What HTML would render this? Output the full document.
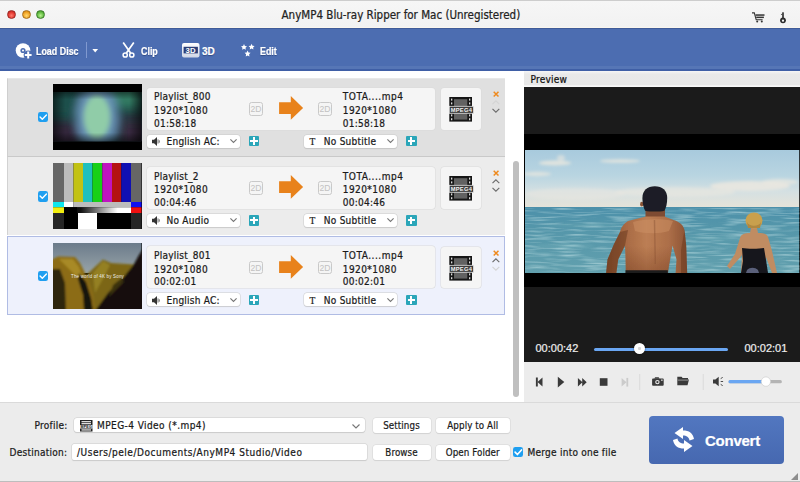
<!DOCTYPE html>
<html><head><meta charset="utf-8"><title>AnyMP4 Blu-ray Ripper for Mac</title>
<style>
html,body{margin:0;padding:0;}
body{width:800px;height:482px;overflow:hidden;background:#fff;position:relative;font-family:"DejaVu Sans Condensed","Liberation Sans",sans-serif;font-size:10px;letter-spacing:.25px;color:#1a1a1a;}
.a{position:absolute;}
svg{position:absolute;overflow:visible;}
.t{position:absolute;white-space:nowrap;line-height:14px;-webkit-text-stroke:.22px currentColor;}
#titlebar{left:0;top:0;width:800px;height:28px;background:linear-gradient(#f6f6f6,#f2f2f2);border-top:1px solid #cdcdcd;border-bottom:1.500px solid #faf6ee;box-sizing:border-box;}
.tl{position:absolute;top:9px;width:9px;height:9px;border-radius:50%;box-sizing:border-box;}
#toolbar{left:0;top:28px;width:800px;height:42.5px;background:#4c6db1;border-top:1px solid #3f5b98;box-sizing:border-box;}
.tb{color:#fff;font-weight:bold;font-size:10px;font-family:"Liberation Sans",sans-serif;letter-spacing:0;transform:scaleX(.89);transform-origin:0 50%;text-shadow:0 1px 1px rgba(30,50,100,.6);}
.row{position:absolute;left:7px;width:498px;height:79.3px;box-sizing:border-box;}
.cb{position:absolute;width:10.300px;height:10.300px;border-radius:2.300px;background:#1f9ff0;}
.box{position:absolute;background:#f5f5f5;border-radius:3px;box-shadow:0 0 0 .5px #d9d9d9;}
.sel{position:absolute;background:#fff;border-radius:3px;box-shadow:0 0 0 .5px #cdcdcd,0 .5px 1px rgba(0,0,0,.15);height:13px;}
.plus{position:absolute;width:10.5px;height:10.5px;background:#2ba6b9;border-radius:1px;}
.plus:before{content:"";position:absolute;left:4.25px;top:1.5px;width:2px;height:7.5px;background:#fff;}
.plus:after{content:"";position:absolute;left:1.5px;top:4.25px;width:7.5px;height:2px;background:#fff;}
.d2{position:absolute;width:13.800px;height:13.600px;letter-spacing:0;box-sizing:border-box;border:1px solid #c9c9c9;border-radius:2.500px;color:#c2c2c2;font-size:8.600px;line-height:12.400px;text-align:center;font-family:"Liberation Sans",sans-serif;}
.btn{position:absolute;background:#fff;border-radius:3px;box-shadow:0 0 0 .5px #d6d6d6,0 .5px .8px rgba(0,0,0,.12);text-align:center;line-height:16px;height:14.5px;overflow:hidden;font-size:9.7px;letter-spacing:.1px;-webkit-text-stroke:.2px currentColor;}
.tm{color:#ededed;letter-spacing:0;font-family:"Liberation Sans",sans-serif;font-size:11px;}
</style></head><body>
<!-- TITLE BAR -->
<div id="titlebar" class="a">
  <div class="tl" style="left:7.4px;background:radial-gradient(circle at 50% 65%,#ff7a6e,#e0342c 60%,#a8201c);border:.5px solid #9a2a26"></div>
  <div class="tl" style="left:21.8px;background:radial-gradient(circle at 50% 65%,#ffd870,#f0a020 60%,#b87410);border:.5px solid #a8701c"></div>
  <div class="tl" style="left:36.400px;background:radial-gradient(circle at 50% 65%,#b8f090,#5cb83c 60%,#3a8024);border:.5px solid #3c7c2c"></div>
  <span class="t" style="left:281.5px;top:6.7px;font-size:11.5px;letter-spacing:0;color:#222;">AnyMP4 Blu-ray Ripper for Mac (Unregistered)</span>
  <!-- cart -->
  <svg style="left:752px;top:10.5px" width="13" height="11" viewBox="0 0 13 11"><path d="M0 .900h2.300l1.900 6.900h6.400" fill="none" stroke="#333" stroke-width="1.100"/><rect x="3.500" y="2.300" width="9" height="1.500" fill="#333"/><rect x="4.200" y="4.600" width="7.700" height="1.500" fill="#333"/><circle cx="5.200" cy="9.500" r="1" fill="#333"/><circle cx="9.800" cy="9.500" r="1" fill="#333"/></svg>
  <!-- key -->
  <svg style="left:779px;top:9.500px" width="8" height="13" viewBox="0 0 8 13"><circle cx="4" cy="9.300" r="2.900" fill="#2c2c2c"/><rect x="3.200" y="1.300" width="1.600" height="6" fill="#2c2c2c"/><path d="M3.200 2.500l-1.400 1.500h1.400z" fill="#2c2c2c"/><circle cx="4" cy="9.700" r="1.150" fill="#f4f4f4"/></svg>
</div>

<!-- TOOLBAR -->
<div id="toolbar" class="a"></div>
<div class="a" style="left:0;top:65.5px;width:800px;height:3.800px;background:#5676b6"></div><div class="a" style="left:0;top:69.200px;width:800px;height:1.400px;background:#3f5fa6"></div>
<!-- load disc icon -->
<svg style="left:15.3px;top:41.7px" width="18" height="18" viewBox="0 0 18 18"><circle cx="8" cy="8.5" r="7.3" fill="#fff"/><circle cx="8" cy="8.5" r="2.6" fill="#4c6db1"/><circle cx="8" cy="8.5" r="1" fill="#fff"/><circle cx="13.2" cy="13" r="4.6" fill="#4c6db1"/><path d="M13.2 9.6v6.8M9.8 13h6.8" stroke="#fff" stroke-width="2"/></svg>
<span class="t tb" style="left:36.3px;top:44.5px;">Load Disc</span>
<div class="a" style="left:86px;top:41.5px;width:1px;height:16.500px;background:#8099d0;"></div>
<svg style="left:92px;top:49.200px" width="6.400" height="3.800" viewBox="0 0 6 4"><path d="M0 0h6L3 3.6z" fill="#fff"/></svg>
<!-- scissors -->
<svg style="left:121.5px;top:42px" width="13" height="16" viewBox="0 0 13 16"><path d="M1.2 0.4L8.6 11M11.8 0.4L4.4 11" stroke="#fff" stroke-width="1.7" fill="none"/><circle cx="3.2" cy="13" r="2.1" fill="none" stroke="#fff" stroke-width="1.5"/><circle cx="9.8" cy="13" r="2.1" fill="none" stroke="#fff" stroke-width="1.5"/></svg>
<span class="t tb" style="left:141px;top:44.5px;">Clip</span>
<!-- 3D icon -->
<svg style="left:181.5px;top:43px" width="18" height="15" viewBox="0 0 18 15"><defs><linearGradient id="g3d" x1="0" y1="0" x2="0" y2="1"><stop offset="0" stop-color="#fff"/><stop offset="1" stop-color="#cfd6e6"/></linearGradient></defs><rect x="0" y="0" width="17.5" height="14.5" rx="2" fill="url(#g3d)"/><rect x="1.600" y="3.800" width="14.300" height="6.600" fill="#2c3f78"/><text x="8.750" y="9.900" font-size="7.800" font-weight="bold" font-family="Liberation Sans,sans-serif" fill="#fff" text-anchor="middle">3D</text></svg>
<span class="t tb" style="left:202px;top:44.5px;transform:none">3D</span>
<!-- edit stars -->
<svg style="left:241px;top:43.5px" width="15" height="13" viewBox="0 0 15 13"><g fill="#fff"><path d="M3 0l.9 1.9 2.1.3-1.5 1.5.35 2.1L3 4.8l-1.85 1 .35-2.1L0 2.2l2.1-.3z"/><path transform="translate(7.6 -0.2)" d="M3 0l.9 1.9 2.1.3-1.5 1.5.35 2.1L3 4.8l-1.85 1 .35-2.1L0 2.2l2.1-.3z"/><path transform="translate(3.6 6.6)" d="M3 0l.9 1.9 2.1.3-1.5 1.5.35 2.1L3 4.8l-1.85 1 .35-2.1L0 2.2l2.1-.3z"/></g></svg>
<span class="t tb" style="left:260px;top:44.5px;">Edit</span>
<!-- LIST -->
<div class="row" style="top:77.5px;background:#e0e0e0;border-left:1px solid #cfcfcf;border-top:1px solid #e8e8e8;"></div>
<div class="cb" style="left:37.8px;top:112.1px"><svg style="left:0;top:0" width="10.300" height="10.300" viewBox="0 0 11 11"><path d="M2.200 5.300l2.400 2.400 4.400-4.600" fill="none" stroke="#fff" stroke-width="1.500" stroke-linecap="round" stroke-linejoin="round"/></svg></div>
<div class="a" style="left:53px;top:84.0px;width:88.5px;height:66px;background:#000;overflow:hidden"><svg style="left:0;top:0" width="88.5" height="66" viewBox="0 0 88.5 66"><defs><filter id="bl1" x="-30%" y="-30%" width="160%" height="160%"><feGaussianBlur stdDeviation="4"/></filter><filter id="bl1b" x="-30%" y="-30%" width="160%" height="160%"><feGaussianBlur stdDeviation="2.8"/></filter><linearGradient id="vg1" x1="0" x2="1" y1="0" y2="0"><stop offset="0" stop-color="#000" stop-opacity=".55"/><stop offset=".14" stop-color="#000" stop-opacity="0"/><stop offset=".86" stop-color="#000" stop-opacity="0"/><stop offset="1" stop-color="#000" stop-opacity=".6"/></linearGradient><linearGradient id="vg1b" x1="0" x2="0" y1="0" y2="1"><stop offset="0" stop-color="#000" stop-opacity=".45"/><stop offset=".15" stop-color="#000" stop-opacity="0"/><stop offset=".82" stop-color="#000" stop-opacity="0"/><stop offset="1" stop-color="#000" stop-opacity=".5"/></linearGradient><clipPath id="c1"><rect x="0" y="8" width="88.5" height="49.2"/></clipPath></defs><g clip-path="url(#c1)"><rect x="0" y="8" width="88.5" height="49.5" fill="#1c4244"/><g filter="url(#bl1)"><rect x="-8" y="2" width="34" height="30" fill="#1d504c"/><rect x="-8" y="38" width="36" height="28" fill="#30283a"/><rect x="56" y="2" width="32" height="22" fill="#327a62"/><rect x="62" y="30" width="34" height="34" fill="#2a3440"/><rect x="70" y="40" width="24" height="24" fill="#382c40"/><ellipse cx="44" cy="33" rx="21" ry="34" fill="#6690b4"/></g><g filter="url(#bl1b)"><ellipse cx="44" cy="33" rx="13.500" ry="22" fill="#90cca8"/></g><rect x="0" y="8" width="88.5" height="49.5" fill="url(#vg1)"/><rect x="0" y="8" width="88.5" height="49.5" fill="url(#vg1b)"/></g></svg>
</div>
<div class="box" style="left:147px;top:87.5px;width:288px;height:42px"></div>
<span class="t" style="left:154px;top:90.3px">Playlist_800</span>
<span class="t" style="left:154px;top:104.0px;letter-spacing:.42px">1920*1080</span>
<span class="t" style="left:154px;top:116.7px">01:58:18</span>
<span class="t" style="left:342.8px;top:90.3px;letter-spacing:.52px">TOTA....mp4</span>
<span class="t" style="left:342.8px;top:104.0px;letter-spacing:.42px">1920*1080</span>
<span class="t" style="left:342.8px;top:116.7px">01:58:18</span>
<div class="d2" style="left:249.1px;top:102.1px">2D</div>
<div class="d2" style="left:318.1px;top:102.1px">2D</div>
<svg style="left:279px;top:96.1px" width="24.200" height="23.800" viewBox="0 0 24.200 24"><path d="M0 6.200h11.800V0L24.200 12 11.800 24v-5.800H0z" fill="#e8821b"/></svg>
<div class="sel" style="left:147px;top:134.7px;width:93px"></div>
<svg style="left:151.5px;top:137.0px" width="8" height="9" viewBox="0 0 8 9"><path d="M0 2.8h2L5 0v9L2 6.2H0z" fill="#333"/><path d="M6 2.4v4.2M7.3 3.3v2.4" stroke="#555" stroke-width=".8"/></svg>
<span class="t" style="left:166.5px;top:135.0px">English AC:</span>
<svg style="left:229.8px;top:138.8px" width="7" height="4" viewBox="0 0 7 4"><path d="M.4.4L3.5 3.4 6.6.4" fill="none" stroke="#777" stroke-width="1.150"/></svg>
<div class="plus" style="left:248.8px;top:135.8px"></div>
<div class="sel" style="left:304px;top:134.7px;width:92.8px"></div>
<span class="t" style="left:309.5px;top:134.8px;font-family:'Liberation Serif',serif;font-size:9.5px;letter-spacing:0">T</span>
<span class="t" style="left:323.8px;top:135.0px">No Subtitle</span>
<svg style="left:386.8px;top:138.8px" width="7" height="4" viewBox="0 0 7 4"><path d="M.4.4L3.5 3.4 6.6.4" fill="none" stroke="#777" stroke-width="1.150"/></svg>
<div class="plus" style="left:406px;top:135.8px"></div>
<div class="box" style="left:441px;top:88.0px;width:40px;height:41.5px"></div>
<svg style="left:448.8px;top:96.8px" width="25" height="25" viewBox="0 0 25 25"><rect x="0.300" y="0" width="22.700" height="24.600" fill="#161616"/><rect x="5" y="2.200" width="13.300" height="7" fill="#626262"/><rect x="5" y="16.200" width="13.300" height="6.400" fill="#626262"/><g fill="#dcdcdc"><rect x="2" y="1.600" width="1.300" height="2"/><rect x="2" y="5.400" width="1.300" height="2"/><rect x="2" y="17.400" width="1.300" height="2"/><rect x="2" y="21.200" width="1.300" height="2"/><rect x="20" y="1.600" width="1.300" height="2"/><rect x="20" y="5.400" width="1.300" height="2"/><rect x="20" y="17.400" width="1.300" height="2"/><rect x="20" y="21.200" width="1.300" height="2"/></g><rect x="0.300" y="9.300" width="24.200" height="7" fill="#3c3c3c" stroke="#e4e4e4" stroke-width=".8"/><text x="12.400" y="15" font-size="5.800" font-weight="bold" font-family="Liberation Sans,sans-serif" fill="#f4f4f4" text-anchor="middle" textLength="21.500" lengthAdjust="spacingAndGlyphs">MPEG4</text></svg>
<svg style="left:493px;top:91.0px" width="6.200" height="6.200" viewBox="0 0 7 7"><path d="M.8.8l5.4 5.4M6.2.8L.8 6.2" stroke="#ef8a1e" stroke-width="1.7"/></svg>
<svg style="left:492.2px;top:99.7px" width="8" height="5" viewBox="0 0 8 5"><path d="M.5 4.200L3.900.800l3.400 3.400" fill="none" stroke="#d4d4d4" stroke-width="1.150"/></svg>
<svg style="left:492.2px;top:107.5px" width="8" height="5" viewBox="0 0 8 5"><path d="M.5.800L3.900 4.200 7.300.800" fill="none" stroke="#6c6c6c" stroke-width="1.150"/></svg>
<div class="row" style="top:156.20000000000002px;background:#ececec;border-left:1px solid #d2d2d2;border-top:1px solid #c9c9c9;"></div>
<div class="cb" style="left:37.8px;top:191.4px"><svg style="left:0;top:0" width="10.300" height="10.300" viewBox="0 0 11 11"><path d="M2.200 5.300l2.400 2.400 4.400-4.600" fill="none" stroke="#fff" stroke-width="1.500" stroke-linecap="round" stroke-linejoin="round"/></svg></div>
<div class="a" style="left:53px;top:163.3px;width:88.5px;height:66px;background:#000;overflow:hidden"><svg style="left:0;top:0" width="88.5" height="66" viewBox="0 0 88.5 66"><defs><linearGradient id="gr2" x1="0" x2="1" y1="0" y2="0"><stop offset="0" stop-color="#000"/><stop offset="0.25" stop-color="#111"/><stop offset="0.8" stop-color="#fff"/><stop offset="1" stop-color="#fff"/></linearGradient></defs>
<rect x="0" y="0" width="11" height="39" fill="#666"/><rect x="11" y="0" width="9.5" height="39" fill="#bcbcbc"/><rect x="20.5" y="0" width="9.5" height="39" fill="#c2c214"/><rect x="30" y="0" width="9.5" height="39" fill="#1fc0bd"/><rect x="39.5" y="0" width="9.8" height="39" fill="#18d018"/><rect x="49.3" y="0" width="9.7" height="39" fill="#c014c0"/><rect x="59" y="0" width="9.3" height="39" fill="#b41212"/><rect x="68.3" y="0" width="9.7" height="39" fill="#1010b4"/><rect x="78" y="0" width="10.5" height="39" fill="#666"/>
<rect x="0" y="39" width="11" height="5.3" fill="#10e6ee"/><rect x="11" y="39" width="9.5" height="5.3" fill="#fff"/><rect x="20.5" y="39" width="57.5" height="5.3" fill="#bcbcbc"/><rect x="78" y="39" width="10.5" height="5.3" fill="#1010f0"/>
<rect x="0" y="44.3" width="11" height="5.7" fill="#f2ee10"/><rect x="11" y="44.3" width="67" height="5.7" fill="url(#gr2)"/><rect x="11" y="44.3" width="13" height="5.7" fill="#000"/><rect x="78" y="44.3" width="10.5" height="5.7" fill="#f01010"/>
<rect x="0" y="50" width="11" height="16" fill="#262626"/><rect x="11" y="50" width="67" height="16" fill="#000"/><rect x="25" y="50" width="19" height="16" fill="#fff"/><rect x="78" y="50" width="10.5" height="16" fill="#262626"/></svg>
</div>
<div class="box" style="left:147px;top:166.8px;width:288px;height:42px"></div>
<span class="t" style="left:154px;top:169.60000000000002px">Playlist_2</span>
<span class="t" style="left:154px;top:183.3px;letter-spacing:.42px">1920*1080</span>
<span class="t" style="left:154px;top:196.0px">00:04:46</span>
<span class="t" style="left:342.8px;top:169.60000000000002px;letter-spacing:.52px">TOTA....mp4</span>
<span class="t" style="left:342.8px;top:183.3px;letter-spacing:.42px">1920*1080</span>
<span class="t" style="left:342.8px;top:196.0px">00:04:46</span>
<div class="d2" style="left:249.1px;top:181.4px">2D</div>
<div class="d2" style="left:318.1px;top:181.4px">2D</div>
<svg style="left:279px;top:175.4px" width="24.200" height="23.800" viewBox="0 0 24.200 24"><path d="M0 6.200h11.800V0L24.200 12 11.800 24v-5.800H0z" fill="#e8821b"/></svg>
<div class="sel" style="left:147px;top:214.0px;width:93px"></div>
<svg style="left:151.5px;top:216.3px" width="8" height="9" viewBox="0 0 8 9"><path d="M0 2.8h2L5 0v9L2 6.2H0z" fill="#333"/><path d="M6 2.4v4.2M7.3 3.3v2.4" stroke="#555" stroke-width=".8"/></svg>
<span class="t" style="left:166.5px;top:214.3px">No Audio</span>
<svg style="left:229.8px;top:218.10000000000002px" width="7" height="4" viewBox="0 0 7 4"><path d="M.4.4L3.5 3.4 6.6.4" fill="none" stroke="#777" stroke-width="1.150"/></svg>
<div class="plus" style="left:248.8px;top:215.10000000000002px"></div>
<div class="sel" style="left:304px;top:214.0px;width:92.8px"></div>
<span class="t" style="left:309.5px;top:214.10000000000002px;font-family:'Liberation Serif',serif;font-size:9.5px;letter-spacing:0">T</span>
<span class="t" style="left:323.8px;top:214.3px">No Subtitle</span>
<svg style="left:386.8px;top:218.10000000000002px" width="7" height="4" viewBox="0 0 7 4"><path d="M.4.4L3.5 3.4 6.6.4" fill="none" stroke="#777" stroke-width="1.150"/></svg>
<div class="plus" style="left:406px;top:215.10000000000002px"></div>
<div class="box" style="left:441px;top:167.3px;width:40px;height:41.5px"></div>
<svg style="left:448.8px;top:176.10000000000002px" width="25" height="25" viewBox="0 0 25 25"><rect x="0.300" y="0" width="22.700" height="24.600" fill="#161616"/><rect x="5" y="2.200" width="13.300" height="7" fill="#626262"/><rect x="5" y="16.200" width="13.300" height="6.400" fill="#626262"/><g fill="#dcdcdc"><rect x="2" y="1.600" width="1.300" height="2"/><rect x="2" y="5.400" width="1.300" height="2"/><rect x="2" y="17.400" width="1.300" height="2"/><rect x="2" y="21.200" width="1.300" height="2"/><rect x="20" y="1.600" width="1.300" height="2"/><rect x="20" y="5.400" width="1.300" height="2"/><rect x="20" y="17.400" width="1.300" height="2"/><rect x="20" y="21.200" width="1.300" height="2"/></g><rect x="0.300" y="9.300" width="24.200" height="7" fill="#3c3c3c" stroke="#e4e4e4" stroke-width=".8"/><text x="12.400" y="15" font-size="5.800" font-weight="bold" font-family="Liberation Sans,sans-serif" fill="#f4f4f4" text-anchor="middle" textLength="21.500" lengthAdjust="spacingAndGlyphs">MPEG4</text></svg>
<svg style="left:493px;top:170.3px" width="6.200" height="6.200" viewBox="0 0 7 7"><path d="M.8.8l5.4 5.4M6.2.8L.8 6.2" stroke="#ef8a1e" stroke-width="1.7"/></svg>
<svg style="left:492.2px;top:179.0px" width="8" height="5" viewBox="0 0 8 5"><path d="M.5 4.200L3.900.800l3.400 3.400" fill="none" stroke="#6c6c6c" stroke-width="1.150"/></svg>
<svg style="left:492.2px;top:186.8px" width="8" height="5" viewBox="0 0 8 5"><path d="M.5.800L3.900 4.200 7.300.800" fill="none" stroke="#6c6c6c" stroke-width="1.150"/></svg>
<div class="row" style="top:236.2px;background:#eef1fc;border:1px solid #b0bce4;"></div>
<div class="cb" style="left:37.8px;top:270.8px"><svg style="left:0;top:0" width="10.300" height="10.300" viewBox="0 0 11 11"><path d="M2.200 5.300l2.400 2.400 4.400-4.600" fill="none" stroke="#fff" stroke-width="1.500" stroke-linecap="round" stroke-linejoin="round"/></svg></div>
<div class="a" style="left:53px;top:242.7px;width:88.5px;height:66px;background:#000;overflow:hidden"><svg style="left:0;top:0" width="88.5" height="66" viewBox="0 0 88.5 66"><defs><linearGradient id="sk3" x1="0" x2="0" y1="0" y2="1"><stop offset="0" stop-color="#6b7b8b"/><stop offset="1" stop-color="#98a4a8"/></linearGradient><filter id="bl3"><feGaussianBlur stdDeviation="1"/></filter></defs>
<rect x="0" y="0" width="88.5" height="30" fill="url(#sk3)"/>
<g filter="url(#bl3)">
<path d="M31 34L50 16.5l8 3.5 24 1.5L66 45 46 68H30z" fill="#7c6619"/>
<path d="M40 30l10-12 7 4-6 12-9 16z" fill="#948024"/>
<path d="M-2 17l7-3.5 17 .5 5 6 5 10 4 9 4 12 2 17H-2z" fill="#8c6c16"/>
<path d="M6 16l14 0 6 8 4 12-8-4-8-8z" fill="#a88a26"/>
<path d="M-2 26l9 0 5 14 1 28H-2z" fill="#2e2610"/>
<path d="M26 30l7 9 5 16 2 13h-9l-1-16-5-16z" fill="#181408"/>
<path d="M90 6l-4 6-5 9-11 14-15 15-13 18h48z" fill="#14110a"/>
<path d="M60 42l10-8 0 6-14 14z" fill="#3a3010"/>
</g>
<text x="18" y="35" font-size="4.6" font-family="Liberation Sans,sans-serif" fill="#f0f0f0" textLength="53" lengthAdjust="spacingAndGlyphs">The world of 4K by Sony</text></svg>
</div>
<div class="box" style="left:147px;top:246.2px;width:288px;height:42px"></div>
<span class="t" style="left:154px;top:249.0px">Playlist_801</span>
<span class="t" style="left:154px;top:262.7px;letter-spacing:.42px">1920*1080</span>
<span class="t" style="left:154px;top:275.4px">00:02:01</span>
<span class="t" style="left:342.8px;top:249.0px;letter-spacing:.52px">TOTA....mp4</span>
<span class="t" style="left:342.8px;top:262.7px;letter-spacing:.42px">1920*1080</span>
<span class="t" style="left:342.8px;top:275.4px">00:02:01</span>
<div class="d2" style="left:249.1px;top:260.8px">2D</div>
<div class="d2" style="left:318.1px;top:260.8px">2D</div>
<svg style="left:279px;top:254.79999999999998px" width="24.200" height="23.800" viewBox="0 0 24.200 24"><path d="M0 6.200h11.800V0L24.200 12 11.800 24v-5.800H0z" fill="#e8821b"/></svg>
<div class="sel" style="left:147px;top:293.4px;width:93px"></div>
<svg style="left:151.5px;top:295.7px" width="8" height="9" viewBox="0 0 8 9"><path d="M0 2.8h2L5 0v9L2 6.2H0z" fill="#333"/><path d="M6 2.4v4.2M7.3 3.3v2.4" stroke="#555" stroke-width=".8"/></svg>
<span class="t" style="left:166.5px;top:293.7px">English AC:</span>
<svg style="left:229.8px;top:297.5px" width="7" height="4" viewBox="0 0 7 4"><path d="M.4.4L3.5 3.4 6.6.4" fill="none" stroke="#777" stroke-width="1.150"/></svg>
<div class="plus" style="left:248.8px;top:294.5px"></div>
<div class="sel" style="left:304px;top:293.4px;width:92.8px"></div>
<span class="t" style="left:309.5px;top:293.5px;font-family:'Liberation Serif',serif;font-size:9.5px;letter-spacing:0">T</span>
<span class="t" style="left:323.8px;top:293.7px">No Subtitle</span>
<svg style="left:386.8px;top:297.5px" width="7" height="4" viewBox="0 0 7 4"><path d="M.4.4L3.5 3.4 6.6.4" fill="none" stroke="#777" stroke-width="1.150"/></svg>
<div class="plus" style="left:406px;top:294.5px"></div>
<div class="box" style="left:441px;top:246.7px;width:40px;height:41.5px"></div>
<svg style="left:448.8px;top:255.5px" width="25" height="25" viewBox="0 0 25 25"><rect x="0.300" y="0" width="22.700" height="24.600" fill="#161616"/><rect x="5" y="2.200" width="13.300" height="7" fill="#626262"/><rect x="5" y="16.200" width="13.300" height="6.400" fill="#626262"/><g fill="#dcdcdc"><rect x="2" y="1.600" width="1.300" height="2"/><rect x="2" y="5.400" width="1.300" height="2"/><rect x="2" y="17.400" width="1.300" height="2"/><rect x="2" y="21.200" width="1.300" height="2"/><rect x="20" y="1.600" width="1.300" height="2"/><rect x="20" y="5.400" width="1.300" height="2"/><rect x="20" y="17.400" width="1.300" height="2"/><rect x="20" y="21.200" width="1.300" height="2"/></g><rect x="0.300" y="9.300" width="24.200" height="7" fill="#3c3c3c" stroke="#e4e4e4" stroke-width=".8"/><text x="12.400" y="15" font-size="5.800" font-weight="bold" font-family="Liberation Sans,sans-serif" fill="#f4f4f4" text-anchor="middle" textLength="21.500" lengthAdjust="spacingAndGlyphs">MPEG4</text></svg>
<svg style="left:493px;top:249.7px" width="6.200" height="6.200" viewBox="0 0 7 7"><path d="M.8.8l5.4 5.4M6.2.8L.8 6.2" stroke="#ef8a1e" stroke-width="1.7"/></svg>
<svg style="left:492.2px;top:258.4px" width="8" height="5" viewBox="0 0 8 5"><path d="M.5 4.200L3.900.800l3.400 3.400" fill="none" stroke="#6c6c6c" stroke-width="1.150"/></svg>
<svg style="left:492.2px;top:266.2px" width="8" height="5" viewBox="0 0 8 5"><path d="M.5.800L3.900 4.200 7.300.800" fill="none" stroke="#d4d4d4" stroke-width="1.150"/></svg>
<div class="a" style="left:513px;top:160.7px;width:6.200px;height:236.100px;background:#bfbfbf;border-radius:3.100px"></div>
<!-- PREVIEW -->
<div class="a" style="left:524px;top:70.6px;width:276px;height:16.400px;background:linear-gradient(#f6f6f6,#e9e9e9 20%,#e8e8e8 85%,#f8f8f8 93%,#f8f8f8);"></div>
<span class="t" style="left:530.5px;top:72.5px;color:#111;">Preview</span>
<div class="a" style="left:524px;top:87px;width:276px;height:274.5px;background:#1b1b1b;"></div>
<div class="a" style="left:524px;top:134px;width:276px;height:153px;background:#000;"></div>
<svg style="left:524.5px;top:149.5px" width="274.500" height="123" viewBox="0 0 274.500 123">
<defs>
<linearGradient id="sky" x1="0" x2="0" y1="0" y2="1"><stop offset="0" stop-color="#a8cadd"/><stop offset="0.45" stop-color="#b9d5e1"/><stop offset="0.72" stop-color="#d4e0e2"/><stop offset="1" stop-color="#e5e3d9"/></linearGradient>
<linearGradient id="sea" x1="0" x2="0" y1="0" y2="1"><stop offset="0" stop-color="#4c90aa"/><stop offset="0.3" stop-color="#5496aa"/><stop offset="1" stop-color="#62a0ae"/></linearGradient><filter id="nz" x="0" y="0" width="100%" height="100%"><feTurbulence type="fractalNoise" baseFrequency="0.035 0.45" numOctaves="2" seed="3" result="t"/><feColorMatrix type="matrix" values="0 0 0 0 .62  0 0 0 0 .82  0 0 0 0 .84  1.600 0 0 0 -.72"/></filter>
<linearGradient id="skin" gradientUnits="userSpaceOnUse" x1="81" x2="162" y1="0" y2="0"><stop offset="0" stop-color="#8a5030"/><stop offset="0.25" stop-color="#a86a44"/><stop offset="0.5" stop-color="#bc7e54"/><stop offset="0.78" stop-color="#ac6e48"/><stop offset="1" stop-color="#8a5234"/></linearGradient>
<linearGradient id="shade" x1="0" x2="0" y1="0" y2="1"><stop offset="0" stop-color="#6a3418" stop-opacity="0"/><stop offset="1" stop-color="#6a3418" stop-opacity=".4"/></linearGradient><filter id="b1"><feGaussianBlur stdDeviation="1.6"/></filter>
<filter id="b05"><feGaussianBlur stdDeviation="0.5"/></filter>
<clipPath id="cp"><rect x="0" y="0" width="274.500" height="123"/></clipPath>
</defs>
<g clip-path="url(#cp)">
<rect x="0" y="0" width="274.500" height="57.500" fill="url(#sky)"/>
<g filter="url(#b1)" fill="#ebe8df">
<ellipse cx="30" cy="13" rx="16" ry="2.5" opacity=".8"/><ellipse cx="95" cy="11" rx="20" ry="1.8" opacity=".8"/><ellipse cx="12" cy="24" rx="14" ry="2.2" opacity=".7"/><ellipse cx="36" cy="8" rx="4" ry="3" opacity=".6"/>
<ellipse cx="225" cy="36" rx="40" ry="5" opacity=".85"/><ellipse cx="150" cy="42" rx="60" ry="5" opacity=".6"/><ellipse cx="50" cy="44" rx="50" ry="6" opacity=".5"/><ellipse cx="255" cy="32" rx="18" ry="3" opacity=".7"/>
</g>
<rect x="0" y="57" width="274.500" height="66" fill="url(#sea)"/>
<rect x="0" y="58" width="274.500" height="65" filter="url(#nz)" opacity=".8"/>
<g filter="url(#b1)" fill="#78b2bc" opacity=".35"><ellipse cx="40" cy="96" rx="30" ry="2"/><ellipse cx="200" cy="88" rx="40" ry="2"/><ellipse cx="110" cy="106" rx="30" ry="2"/><ellipse cx="230" cy="110" rx="30" ry="2"/><ellipse cx="60" cy="75" rx="40" ry="1.5"/></g>
<!-- man -->
<g filter="url(#b05)">
<rect x="120.5" y="56" width="19.500" height="14" fill="#7e4c30"/>
<path d="M103 71C98 74 96 78 95 82L89 94 82.500 109.500 81 124H91.200L93.200 109.500 100 95.500 101 124H142.500L147.500 95.500 151.500 109.500 150.500 124H162.200L161.200 95.500 159.500 80C158 74 153 71.500 148.500 70L139.500 66.500H120.800z" fill="url(#skin)"/>
<path d="M95 82L89 94 82.500 109.500 81 124H91.200L93.200 109.500 100 95.500 103 80z" fill="#5e3018" opacity=".45"/>
<path d="M159.500 80L161.200 95.500 162.200 124H156L156 100z" fill="#5e3018" opacity=".4"/>
<path d="M108 72c8-3 30-4 40-1l-4 10c-10 3-24 3-34 0z" fill="#d09468" opacity=".45"/>
<path d="M101 96L100.500 124H143L147.500 96z" fill="url(#shade)"/>
<path d="M100.500 120.200h42.300v4h-42.300z" fill="#1a1a1e"/>
<ellipse cx="116.700" cy="54.200" rx="1.600" ry="2.400" fill="#8a5436"/>
<path d="M117.400 48c0-7.500 4.900-11.700 12.400-11.700s12.400 4.200 12.400 11.700c0 6-1.200 9.600-2.700 12.700-5 1.200-14.400 1.200-19.400 0-1.500-3.100-2.700-6.700-2.700-12.700z" fill="#1b1f27"/>
<path d="M129.500 70l.8 44" stroke="#8a5234" stroke-width="1.400" fill="none" opacity=".45"/>
</g>
<!-- woman -->
<g filter="url(#b05)">
<path d="M226 78h6l1 5c5 0 9 1 10 4l4 14 5 22h-5l-6-16-1 16h-24l1-18-5 6-7 8-3-3 8-12 5-16c1-4 5-5 10-5z" fill="#c08c62"/>
<path d="M217 98c5 1 17 1 22 0l2 12 2 13h-27l2-12z" fill="#15151c"/>
<path d="M222 120c3-3 8-3 11 0l1 3h-13z" fill="#5a607a"/>
<ellipse cx="229" cy="70.500" rx="8.500" ry="8" fill="#c9a04e"/>
<path d="M222 72c2 5 12 5 14 0l-1 6h-12z" fill="#b08840"/>
</g>
</g>
</svg>
<!-- time & slider -->
<span class="t tm" style="left:535.5px;top:340.5px;">00:00:42</span>
<span class="t tm" style="left:744.5px;top:340.5px;">00:02:01</span>
<div class="a" style="left:594.2px;top:347.7px;width:134.300px;height:3.400px;background:#6aa6f2;border-radius:1.700px"></div>
<div class="a" style="left:634.3px;top:343.300px;width:11.200px;height:11.200px;border-radius:50%;background:radial-gradient(circle,#d8d8d8 0,#d8d8d8 1.200px,#fff 2px);box-shadow:0 0 1.500px #000"></div>
<!-- controls -->
<div class="a" style="left:524px;top:361.5px;width:276px;height:40.5px;background:#ececec;"></div>
<svg style="left:524px;top:361.5px" width="276" height="40" viewBox="0 0 276 40">
<g fill="#3a3a3a">
<rect x="11.9" y="15.5" width="1.9" height="9"/><path d="M18.5 15.5v9l-5-4.500z"/>
<path d="M33.8 14.700l6.500 5.400-6.500 5.400z"/>
<path d="M53.9 15.900l4.500 4.350-4.500 4.350zM58.200 15.900l4.500 4.350-4.500 4.350z"/>
<rect x="75.800" y="16.200" width="7.700" height="7.600"/>
<path d="M130.300 16.800l.8-1.600h3.600l.8 1.600z"/><rect x="128.100" y="16.500" width="11.600" height="7.200" rx=".9"/>
<path d="M153.300 14.800h4.300l1 1.200h5.400v2.200h-10.700z"/><path d="M153.300 23.300v-5.300l.6 0 .5-.600h10.600l-1.500 5.900z"/>
<path d="M189 17.600h2.400l3.300-2.800v9.400l-3.300-2.800H189z"/>
</g>
<circle cx="133.400" cy="20.100" r="2.200" fill="#ececec"/><circle cx="133.400" cy="20.100" r="1.150" fill="#3a3a3a"/><rect x="137" y="17.600" width="1.700" height="1.100" fill="#ececec"/>
<path d="M153.600 18.100h10.800" stroke="#ececec" stroke-width=".5"/>
<path d="M196.700 16.600l2-1.200M196.700 19.500h2.400M196.700 22.400l2 1.200" stroke="#3a3a3a" stroke-width=".9"/>
<g fill="#cbcbcb"><path d="M97.600 15.900l4.900 4.350-4.900 4.350z"/><rect x="102.400" y="15.900" width="1.800" height="8.700"/></g>
<path d="M115.700 12v16M179.200 12v16" stroke="#dadada" stroke-width="1"/>
<rect x="204.500" y="18.100" width="53.400" height="3.200" rx="1.600" fill="#b4b4b4"/><rect x="204.500" y="18.100" width="38" height="3.200" rx="1.600" fill="#6aa6f2"/>
<circle cx="241.900" cy="19.600" r="4.700" fill="#fff" stroke="#c8c8c8" stroke-width=".6"/>
</svg>
<!-- BOTTOM -->
<div class="a" style="left:0;top:402px;width:800px;height:80px;background:#ececec;border-top:1px solid #dadada;box-sizing:border-box;"></div>
<span class="t" style="left:34.5px;top:418.500px;">Profile:</span>
<span class="t" style="left:9.500px;top:445.500px;">Destination:</span>
<div class="sel" style="left:74.400px;top:417.800px;width:290.600px;height:14.500px"></div>
<svg style="left:79.5px;top:419.5px" width="13" height="12" viewBox="0 0 13 12"><rect x="0" y="0" width="12.500" height="11.500" fill="#222"/><rect x="1.500" y="1" width="9.500" height="1.300" fill="#ddd"/><rect x="1.500" y="3" width="9.500" height="1.300" fill="#ddd"/><rect x="0" y="5" width="12.500" height="3.500" fill="#eee"/><text x="6.250" y="8.200" font-size="3.600" font-weight="bold" font-family="Liberation Sans,sans-serif" text-anchor="middle" fill="#111">MPEG</text><rect x="1.500" y="9.300" width="9.500" height="1.300" fill="#ddd"/></svg>
<span class="t" style="left:97px;top:418.500px;letter-spacing:.43px">MPEG-4 Video (*.mp4)</span>
<svg style="left:352px;top:423.500px" width="8" height="5" viewBox="0 0 8 5"><path d="M.5.5L4 4l3.500-3.500" fill="none" stroke="#777" stroke-width="1.150"/></svg>
<div class="sel" style="left:72.400px;top:444.400px;width:294.600px;height:15.200px;border-radius:2px"></div>
<span class="t" style="left:77px;top:445.500px;letter-spacing:.53px">/Users/pele/Documents/AnyMP4 Studio/Video</span>
<div class="btn" style="left:372.5px;top:418px;width:58px">Settings</div>
<div class="btn" style="left:436px;top:418px;width:73.5px">Apply to All</div>
<div class="btn" style="left:372.5px;top:445px;width:58px">Browse</div>
<div class="btn" style="left:436px;top:445px;width:73.5px">Open Folder</div>
<div class="cb" style="left:512.5px;top:446.500px;width:10.500px;height:10.500px"><svg style="left:0;top:0" width="10.500" height="10.500" viewBox="0 0 11 11"><path d="M2.200 5.400l2.400 2.500 4.300-4.800" fill="none" stroke="#fff" stroke-width="1.700" stroke-linecap="round" stroke-linejoin="round"/></svg></div>
<span class="t" style="left:527.5px;top:445.500px;">Merge into one file</span>
<div class="a" style="left:648.5px;top:416px;width:135.5px;height:47.5px;background:linear-gradient(#5277c0,#4668b0);border-radius:4px;"></div>
<svg style="left:673px;top:427px" width="21" height="25" viewBox="0 0 21 25"><g fill="#fff"><path d="M10 0L1.500 6 10 12V8.500c3.500 0 6 1.500 6.500 5l4.500-1.500C20 6 16 3.500 10 3.500z"/><path transform="rotate(180 10.500 12.500)" d="M10 0L1.500 6 10 12V8.500c3.500 0 6 1.500 6.500 5l4.500-1.500C20 6 16 3.500 10 3.500z"/></g></svg>
<span class="t" style="left:705px;top:430.5px;font-size:15px;font-weight:bold;color:#fff;line-height:20px;font-family:'Liberation Sans',sans-serif;letter-spacing:-.25px">Convert</span>
<svg style="left:790.5px;top:472.5px" width="7" height="7" viewBox="0 0 7 7"><path d="M7 0v7H0z" fill="#8c8c8c"/></svg>
<div class="a" style="left:0;top:480.5px;width:800px;height:1.5px;background:#bdbdbd"></div>

</body></html>
